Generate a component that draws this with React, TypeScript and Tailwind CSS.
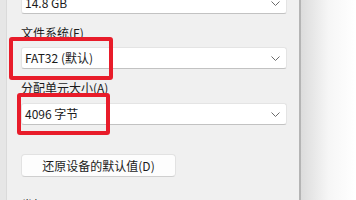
import React from 'react';

const font = { fontFamily: '"Noto Sans CJK SC", "Noto Sans", sans-serif' };

function Combo({ value }: { value: string }) {
  return (
    <div className="flex h-[22px] w-[266px] items-center justify-between rounded-[3px] border border-[#e4e4e4] border-b-[#c2c2c2] bg-white pl-[3px] pr-[6px]">
      <span className="text-[12px] leading-none text-[#1b1b1b]">{value}</span>
      <svg width="9" height="5" viewBox="0 0 9 5" className="text-[#6b6b6b]">
        <path d="M0.5 0.5 L4.5 4.5 L8.5 0.5" fill="none" stroke="currentColor" strokeWidth="1" />
      </svg>
    </div>
  );
}

export default function App() {
  return (
    <div className="flex h-[200px] w-[356px] overflow-hidden bg-white" style={font}>
      <div className="relative flex w-[299px] shrink-0 bg-[#f0f0f0]">
        <div className="w-[7px] shrink-0 border-r border-[#dadada] bg-[#e6e6e6]" />
        <div className="flex flex-col pl-[14px] [&>*]:shrink-0">
          <div className="-mt-[8px]">
            <Combo value="14.8 GB" />
          </div>
          <div className="mt-[11px] h-[16px] text-[12px] leading-[16px] text-[#1b1b1b]">文件系统(F)</div>
          <div className="mt-[6px]">
            <Combo value="FAT32 (默认)" />
          </div>
          <div className="mt-[11px] h-[16px] text-[12px] leading-[16px] text-[#1b1b1b]">分配单元大小(A)</div>
          <div className="mt-[7px]">
            <Combo value="4096 字节" />
          </div>
          <button className="mt-[29px] flex h-[23px] w-[155px] items-center justify-center rounded-[4px] border border-[#e2e2e2] border-b-[#cfcfcf] bg-[#fdfdfd] text-[12px] leading-none text-[#1b1b1b]">
            还原设备的默认值(D)
          </button>
          <div className="mt-[20px] text-[12px] leading-[16px] text-[#1b1b1b]">卷标(L)</div>
        </div>
        <div className="absolute left-[9px] top-[37px] h-[43px] w-[104px] rounded-[3px] border-[4px] border-[#e81c2a]" />
        <div className="absolute left-[17px] top-[93px] h-[42px] w-[93px] rounded-[3px] border-[4px] border-[#e81c2a]" />
      </div>
      <div className="w-[2px] shrink-0 bg-[#b4b4b4]" />
      <div className="flex-1 bg-gradient-to-r from-[#dcdcdc] via-[#f6f6f6] to-white" />
    </div>
  );
}
